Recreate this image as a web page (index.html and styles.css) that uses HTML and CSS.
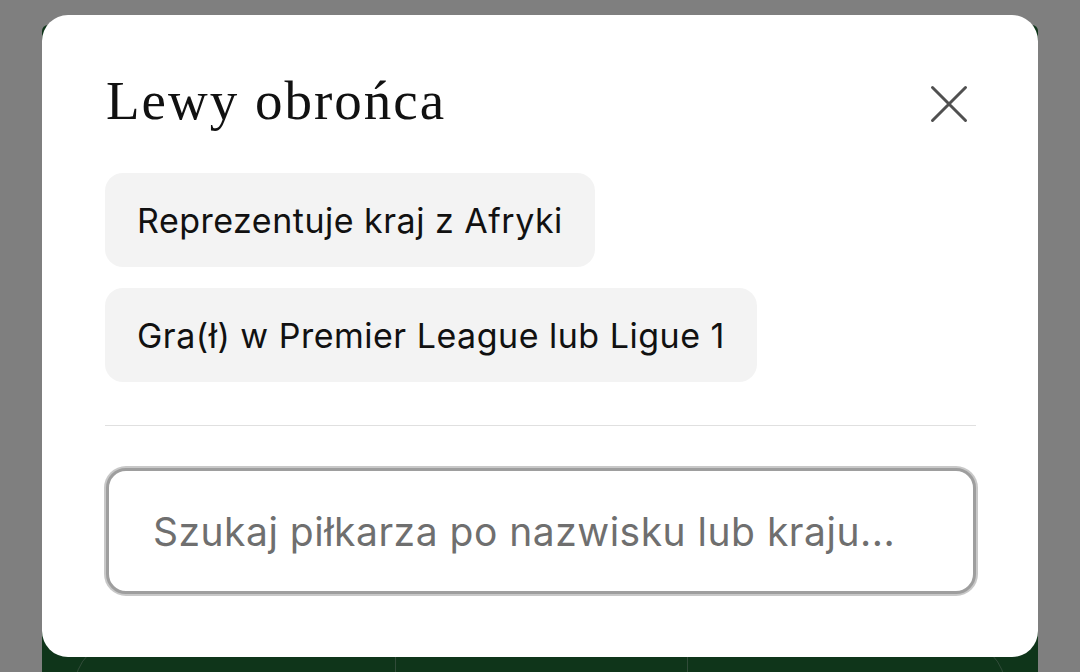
FILE: index.html
```html
<!DOCTYPE html>
<html lang="pl">
<head>
  <meta charset="UTF-8">
  <meta name="viewport" content="width=device-width, initial-scale=1.0">
  <title>Lewy obrońca</title>
  <link rel="stylesheet" href="styles.css">
</head>
<body>
  <div class="board">
    <div class="pitch">
      <div class="zone"></div>
      <div class="zone"></div>
      <div class="zone"></div>
    </div>
  </div>

  <div class="backdrop">
    <div class="modal">
      <div class="modal-header">
        <h1>Lewy obrońca</h1>
        <button class="close-btn" aria-label="Zamknij">
          <svg width="48" height="48" viewBox="0 0 48 48">
            <path d="M7.5 7.5 L40.5 40.5 M40.5 7.5 L7.5 40.5" stroke="#505050" stroke-width="3" stroke-linecap="round" fill="none"/>
          </svg>
        </button>
      </div>

      <div class="criteria">
        <div class="chip">Reprezentuje kraj z Afryki</div>
        <div class="chip">Gra(ł) w Premier League lub Ligue 1</div>
      </div>

      <hr class="divider">

      <input class="search" type="text" placeholder="Szukaj piłkarza po nazwisku lub kraju...">
    </div>
  </div>
</body>
</html>
```

FILE: styles.css
```css
* {
  margin: 0;
  padding: 0;
  box-sizing: border-box;
}

body {
  background-color: #ffffff;
  font-family: 'Inter', 'Roboto', sans-serif;
  overflow: hidden;
  height: 672px;
}

/* Game board behind the modal */
.board {
  margin: 25px 42px 0;
  height: 647px;
  overflow: hidden;
  background-color: #1f6a35;
  border-radius: 6px 6px 0 0;
  padding-top: 615px;
}

.pitch {
  margin: 0 32px;
  height: 160px;
  border: 1px solid rgba(255, 255, 255, 0.3);
  border-radius: 48px;
  display: grid;
  grid-template-columns: 320px 292px 1fr;
}

.zone + .zone {
  border-left: 1px solid rgba(255, 255, 255, 0.3);
}

/* Modal */
.backdrop {
  position: fixed;
  inset: 0;
  background: rgba(0, 0, 0, 0.5);
}

.modal {
  position: absolute;
  left: 42px;
  top: 15px;
  width: 996px;
  height: 642px;
  background: #ffffff;
  border-radius: 26px;
  padding: 54px 62px 0 63px;
  display: flex;
  flex-direction: column;
}

.modal-header {
  display: flex;
  align-items: center;
  justify-content: space-between;
  height: 64px;
}

.modal-header h1 {
  font-family: 'Liberation Serif', serif;
  font-weight: 400;
  font-size: 55px;
  line-height: 64px;
  letter-spacing: 2px;
  color: #111111;
  margin-left: 1px;
}

.close-btn {
  background: none;
  border: none;
  width: 48px;
  height: 48px;
  margin: 6px 3px 0 0;
  cursor: pointer;
}

.close-btn svg {
  display: block;
}

.criteria {
  margin-top: 40px;
  display: flex;
  flex-direction: column;
  align-items: flex-start;
  gap: 21px;
}

.chip {
  background: #f3f3f3;
  border-radius: 18px;
  height: 94px;
  padding: 0 32px;
  display: flex;
  align-items: center;
  font-size: 34px;
  letter-spacing: 0.5px;
  color: #111111;
}

.divider {
  border: none;
  border-top: 1px solid #e0e0e0;
  margin-top: 43px;
}

.search {
  margin-top: 42px;
  width: 870px;
  height: 126px;
  margin-left: 1px;
  border: 3px solid #9e9e9e;
  box-shadow: 0 0 0 2px #c8c8c8;
  border-radius: 20px;
  padding: 0 44px;
  font-family: inherit;
  font-size: 39px;
  letter-spacing: 0.5px;
  color: #222222;
  outline: none;
}

.search::placeholder {
  color: #6f6f6f;
}
```
